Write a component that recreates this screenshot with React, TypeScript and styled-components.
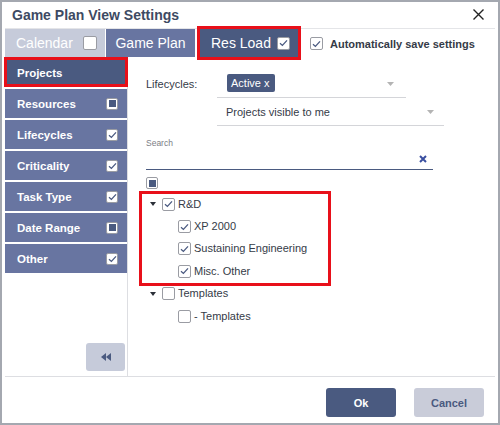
import React from "react";
import styled, { createGlobalStyle } from "styled-components";

const NAVY = "#4a5a80";
const SLATE = "#6875a1";
const PALE = "#c6cbda";
const TEXT = "#353b47";

const GlobalStyle = createGlobalStyle`
  html, body {
    margin: 0;
    padding: 0;
    background: #ffffff;
  }

  body {
    font-family: "Liberation Sans", Arial, sans-serif;
    color: ${TEXT};
  }
`;

type BoxState = "checked" | "empty" | "partial";

const CheckIcon: React.FC = () => (
  <svg width="9" height="8" viewBox="0 0 9 8" fill="none">
    <path d="M1 4.2 L3.4 6.4 L8 1.4" stroke={NAVY} strokeWidth="1.3" />
  </svg>
);

const Checkbox: React.FC<{ state?: BoxState; size?: number }> = ({
  state = "empty",
  size = 13,
}) => (
  <Box $size={size}>
    {state === "checked" ? <CheckIcon /> : null}
    {state === "partial" ? <PartialMark /> : null}
  </Box>
);

const sideItems: { label: string; state?: BoxState }[] = [
  { label: "Projects" },
  { label: "Resources", state: "partial" },
  { label: "Lifecycles", state: "checked" },
  { label: "Criticality", state: "checked" },
  { label: "Task Type", state: "checked" },
  { label: "Date Range", state: "partial" },
  { label: "Other", state: "checked" },
];

const Caret: React.FC = () => (
  <svg width="7" height="4" viewBox="0 0 7 4">
    <polygon points="0,0 7,0 3.5,4" fill="#b4b4b4" />
  </svg>
);

const App: React.FC = () => {
  return (
    <>
      <GlobalStyle />
      <Dialog>
        <Header>
          <Title>Game Plan View Settings</Title>
          <CloseButton aria-label="Close">
            <svg width="11" height="11" viewBox="0 0 11 11">
              <path d="M0.5 0.5 L10.5 10.5 M10.5 0.5 L0.5 10.5" stroke="#222" strokeWidth="1.4" />
            </svg>
          </CloseButton>
        </Header>

        <TabBar>
          <Tab $variant="light" $width={100}>
            Calendar
            <Checkbox size={14} />
          </Tab>
          <Tab $variant="medium" $width={89} $center>
            Game Plan
          </Tab>
          <Tab $variant="dark" $width={98} $highlighted>
            Res Load
            <Checkbox state="checked" />
          </Tab>
          <AutoSave>
            <Checkbox state="checked" />
            Automatically save settings
          </AutoSave>
        </TabBar>

        <Body>
          <Sidebar>
            <NavList>
              {sideItems.map((item, i) => (
                <NavItem key={item.label} $active={i === 0}>
                  {item.label}
                  {item.state ? <Checkbox state={item.state} size={12} /> : null}
                </NavItem>
              ))}
            </NavList>
            <CollapseButton aria-label="Collapse">
              <svg width="10" height="8" viewBox="0 0 10 8">
                <polygon points="5,0 0,4 5,8" fill={NAVY} />
                <polygon points="10,0 5,4 10,8" fill={NAVY} />
              </svg>
            </CollapseButton>
          </Sidebar>

          <Panel>
            <FieldRow $top={13}>
              <FieldLabel>Lifecycles:</FieldLabel>
              <Select $width={189} $padLeft={10} $padRight={12}>
                <Chip>Active x</Chip>
                <Caret />
              </Select>
            </FieldRow>
            <FieldRow>
              <FieldLabel />
              <Select $width={227} $padLeft={9} $padRight={10}>
                <span>Projects visible to me</span>
                <Caret />
              </Select>
            </FieldRow>

            <SearchLabel>Search</SearchLabel>
            <SearchInput>
              <svg width="8" height="8" viewBox="0 0 8 8">
                <path d="M1 1 L7 7 M7 1 L1 7" stroke="#3a4fa0" strokeWidth="2" />
              </svg>
            </SearchInput>

            <Tree>
              <TopRow>
                <Checkbox state="partial" size={12} />
              </TopRow>
              <Group $highlighted>
                <TreeRow>
                  <Toggle />
                  <Checkbox state="checked" />
                  <span>R&amp;D</span>
                </TreeRow>
                <TreeRow $child>
                  <Checkbox state="checked" />
                  <span>XP 2000</span>
                </TreeRow>
                <TreeRow $child>
                  <Checkbox state="checked" />
                  <span>Sustaining Engineering</span>
                </TreeRow>
                <TreeRow $child>
                  <Checkbox state="checked" />
                  <span>Misc. Other</span>
                </TreeRow>
              </Group>
              <Group>
                <TreeRow>
                  <Toggle />
                  <Checkbox />
                  <span>Templates</span>
                </TreeRow>
                <TreeRow $child>
                  <Checkbox />
                  <span>- Templates</span>
                </TreeRow>
              </Group>
            </Tree>
          </Panel>
        </Body>

        <Footer>
          <Button $primary>Ok</Button>
          <Button>Cancel</Button>
        </Footer>
      </Dialog>
    </>
  );
};

const Dialog = styled.div`
  width: 500px;
  height: 425px;
  box-sizing: border-box;
  border: 2px solid #a4a8b0;
  padding: 0 3px;
  display: flex;
  flex-direction: column;
  background: #ffffff;
`;

const Header = styled.div`
  height: 26px;
  flex-shrink: 0;
  display: flex;
  align-items: center;
  justify-content: space-between;
  border-bottom: 1px solid #e4e5e8;
`;

const Title = styled.h1`
  margin: 0 0 0 7px;
  font-size: 14px;
  font-weight: 700;
  color: #3d4a63;
`;

const CloseButton = styled.button`
  border: none;
  background: none;
  padding: 0;
  margin-right: 11px;
  margin-top: -1px;
  display: flex;
  cursor: pointer;
`;

const TabBar = styled.div`
  height: 28px;
  flex-shrink: 0;
  display: flex;
  align-items: stretch;
`;

const tabColors = {
  light: PALE,
  medium: SLATE,
  dark: NAVY,
};

const Tab = styled.div<{
  $variant: keyof typeof tabColors;
  $width: number;
  $center?: boolean;
  $highlighted?: boolean;
}>`
  position: relative;
  width: ${({ $width }) => $width}px;
  box-sizing: border-box;
  margin-right: ${({ $variant }) => ($variant === "light" ? 1 : 5)}px;
  padding: ${({ $center }) => ($center ? "0" : "0 8px 0 11px")};
  display: flex;
  align-items: center;
  justify-content: ${({ $center }) => ($center ? "center" : "space-between")};
  background: ${({ $variant }) => tabColors[$variant]};
  color: #ffffff;
  font-size: 14px;

  ${({ $highlighted }) =>
    $highlighted &&
    `
    &::after {
      content: "";
      position: absolute;
      inset: -3px;
      border: 3px solid #e8101a;
      pointer-events: none;
    }
  `}
`;

const AutoSave = styled.label`
  margin-left: 7px;
  display: flex;
  align-items: center;
  gap: 7px;
  font-size: 11px;
  font-weight: 700;
  color: ${TEXT};
  padding-top: 1px;
`;

const Box = styled.span<{ $size: number }>`
  width: ${({ $size }) => $size}px;
  height: ${({ $size }) => $size}px;
  box-sizing: border-box;
  border: 1px solid #9a9ca3;
  border-radius: 2px;
  background: #ffffff;
  display: inline-flex;
  align-items: center;
  justify-content: center;
  flex-shrink: 0;
`;

const PartialMark = styled.span`
  width: 7px;
  height: 7px;
  background: ${NAVY};
`;

const Body = styled.div`
  flex: 1;
  display: flex;
  min-height: 0;
`;

const Sidebar = styled.div`
  width: 123px;
  flex-shrink: 0;
  box-sizing: border-box;
  border-right: 1px solid #dddee2;
  padding: 1px 0 5px;
  display: flex;
  flex-direction: column;
`;

const NavList = styled.div`
  display: flex;
  flex-direction: column;
  gap: 2px;
`;

const NavItem = styled.div<{ $active?: boolean }>`
  position: relative;
  height: 29px;
  box-sizing: border-box;
  padding: 0 9px 0 12px;
  display: flex;
  align-items: center;
  justify-content: space-between;
  background: ${({ $active }) => ($active ? NAVY : SLATE)};
  color: #ffffff;
  font-size: 11.5px;
  font-weight: 700;

  ${({ $active }) =>
    $active &&
    `
    &::after {
      content: "";
      position: absolute;
      inset: -1px -1px 0 -1px;
      border: 3px solid #e8101a;
      pointer-events: none;
    }
  `}
`;

const CollapseButton = styled.button`
  margin: auto 2px 0 auto;
  width: 39px;
  height: 28px;
  border: none;
  border-radius: 3px;
  background: ${PALE};
  display: flex;
  align-items: center;
  justify-content: center;
  padding: 0;
`;

const Panel = styled.div`
  flex: 1;
  padding-left: 18px;
  font-size: 11px;
  color: ${TEXT};
`;

const FieldRow = styled.div<{ $top?: number }>`
  display: flex;
  margin-top: ${({ $top }) => $top ?? 0}px;
`;

const FieldLabel = styled.div`
  width: 71px;
  flex-shrink: 0;
  height: 27px;
  display: flex;
  align-items: center;
`;

const Select = styled.div<{ $width: number; $padLeft: number; $padRight: number }>`
  width: ${({ $width }) => $width}px;
  height: 28px;
  box-sizing: border-box;
  border-bottom: 1px solid #d4d5d9;
  padding: 0 ${({ $padRight }) => $padRight}px 0 ${({ $padLeft }) => $padLeft}px;
  display: flex;
  align-items: center;
  justify-content: space-between;
`;

const Chip = styled.span`
  height: 18px;
  padding: 0 5px 0 4px;
  display: inline-flex;
  align-items: center;
  background: ${NAVY};
  color: #ffffff;
  border-radius: 2px;
  margin-top: -1px;
`;

const SearchLabel = styled.div`
  margin-top: 12px;
  font-size: 8.5px;
  line-height: 10px;
  color: #7b7e86;
`;

const SearchInput = styled.div`
  width: 287px;
  height: 22px;
  box-sizing: border-box;
  border-bottom: 1px solid ${NAVY};
  display: flex;
  align-items: center;
  justify-content: flex-end;
  padding-right: 6px;
`;

const Tree = styled.div`
  margin-top: 3px;
  display: flex;
  flex-direction: column;
`;

const TopRow = styled.div`
  height: 20px;
  display: flex;
  align-items: center;
`;

const Group = styled.div<{ $highlighted?: boolean }>`
  position: relative;
  display: flex;
  flex-direction: column;

  ${({ $highlighted }) =>
    $highlighted &&
    `
    &::after {
      content: "";
      position: absolute;
      left: -7px;
      top: -2px;
      width: 192px;
      bottom: -3px;
      border: 3px solid #e8101a;
      box-sizing: border-box;
      pointer-events: none;
    }
  `}
`;

const TreeRow = styled.div<{ $child?: boolean }>`
  height: 22.4px;
  display: flex;
  align-items: center;
  gap: 3px;
  padding-left: ${({ $child }) => ($child ? 32 : 0)}px;
  font-size: 11px;

  span {
    line-height: 1;
  }
`;

const Toggle = styled.span`
  width: 0;
  height: 0;
  margin: 0 3px 0 4px;
  border-left: 3px solid transparent;
  border-right: 3px solid transparent;
  border-top: 4px solid #2b2f38;
`;

const Footer = styled.div`
  height: 47px;
  box-sizing: border-box;
  flex-shrink: 0;
  border-top: 1px solid #dddee2;
  padding: 11px 11px 0 0;
  display: flex;
  justify-content: flex-end;
  align-items: flex-start;
  gap: 18px;
`;

const Button = styled.button<{ $primary?: boolean }>`
  width: 70px;
  height: 29px;
  border: none;
  border-radius: 3px;
  font-family: "Liberation Sans", Arial, sans-serif;
  font-size: 11px;
  font-weight: 700;
  background: ${({ $primary }) => ($primary ? NAVY : "#c9ccd9")};
  color: ${({ $primary }) => ($primary ? "#ffffff" : NAVY)};
  cursor: pointer;
`;

export default App;
